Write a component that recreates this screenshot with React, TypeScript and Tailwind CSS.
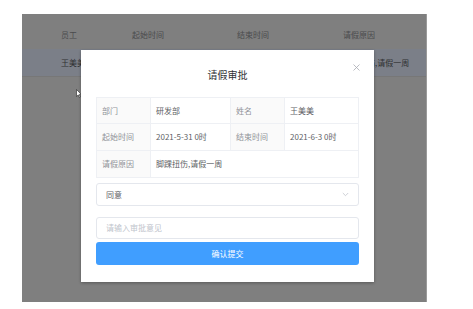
import React from 'react';

const font = { fontFamily: '"Noto Sans CJK SC", "Noto Sans", sans-serif' };

const rows = [
  { name: '王美美', start: '2021-5-31 0时', end: '2021-6-3 0时', reason: '脚踝扭伤,请假一周' },
];

export default function App() {
  return (
    <div className="w-[473px] h-[309px] bg-white overflow-hidden pt-[14px] pl-[22px]" style={font}>
      <div className="relative w-[405px] h-[288px] bg-[#7f7f7f] border-r border-[#9a9a9a]">
        {/* table behind the mask */}
        <div className="grid grid-cols-[71px_105px_106px_1fr] pl-[39px] h-[35px] items-center pt-[6px] text-[8px] text-[#4a4b4d]">
          <span>员工</span>
          <span>起始时间</span>
          <span>结束时间</span>
          <span>请假原因</span>
        </div>
        {rows.map((r) => (
          <div key={r.name} className="grid grid-cols-[71px_105px_106px_1fr] pl-[39px] h-[28px] items-center text-[8px] text-[#303133] bg-[#7b7f88] border-b border-[#777]">
            <span>{r.name}</span>
            <span>{r.start}</span>
            <span>{r.end}</span>
            <span>{r.reason}</span>
          </div>
        ))}

        {/* mouse cursor */}
        <svg className="absolute left-[54px] top-[75px]" width="6" height="9" viewBox="0 0 6 9">
          <path d="M0.5 0.5 L0.5 7.5 L2.2 6 L3.4 8.5 L4.4 8 L3.3 5.6 L5.5 5.6 Z" fill="#fff" stroke="#222" strokeWidth="0.6" />
        </svg>

        {/* dialog */}
        <div className="absolute left-[59px] top-[36px] w-[293px] h-[232px] bg-white shadow-[0_1px_3px_rgba(0,0,0,0.3)] px-[15px]">
          <div className="relative h-[47px] flex items-center justify-center pt-[1px]">
            <span className="text-[10px] text-[#303133]">请假审批</span>
            <svg className="absolute right-[-1px] top-[14px]" width="7" height="7" viewBox="0 0 7 7">
              <path d="M0.5 0.5 L6.5 6.5 M6.5 0.5 L0.5 6.5" stroke="#a8abb2" strokeWidth="0.8" />
            </svg>
          </div>

          <div className="border-t border-l border-[#eef0f4] text-[8px] text-[#606266]">
            <div className="grid grid-cols-[54px_80px_54px_1fr] h-[26px]">
              <div className="bg-[#fafafa] border-r border-b border-[#eef0f4] flex items-center pl-[5px] text-[#909399]">部门</div>
              <div className="border-r border-b border-[#eef0f4] flex items-center pl-[5px]">研发部</div>
              <div className="bg-[#fafafa] border-r border-b border-[#eef0f4] flex items-center pl-[5px] text-[#909399]">姓名</div>
              <div className="border-r border-b border-[#eef0f4] flex items-center pl-[5px]">王美美</div>
            </div>
            <div className="grid grid-cols-[54px_80px_54px_1fr] h-[27px]">
              <div className="bg-[#fafafa] border-r border-b border-[#eef0f4] flex items-center pl-[5px] text-[#909399]">起始时间</div>
              <div className="border-r border-b border-[#eef0f4] flex items-center pl-[5px]">2021-5-31 0时</div>
              <div className="bg-[#fafafa] border-r border-b border-[#eef0f4] flex items-center pl-[5px] text-[#909399]">结束时间</div>
              <div className="border-r border-b border-[#eef0f4] flex items-center pl-[5px]">2021-6-3 0时</div>
            </div>
            <div className="grid grid-cols-[54px_1fr] h-[27px]">
              <div className="bg-[#fafafa] border-r border-b border-[#eef0f4] flex items-center pl-[5px] text-[#909399]">请假原因</div>
              <div className="border-r border-b border-[#eef0f4] flex items-center pl-[5px]">脚踝扭伤,请假一周</div>
            </div>
          </div>

          <div className="mt-[5px] h-[23px] border border-[#e4e7ed] rounded-[3px] flex items-center justify-between px-[9px] text-[8px] text-[#606266]">
            <span>同意</span>
            <svg width="7" height="5" viewBox="0 0 7 5">
              <path d="M0.8 1 L3.5 3.7 L6.2 1" fill="none" stroke="#c0c4cc" strokeWidth="0.8" />
            </svg>
          </div>

          <div className="mt-[11px] h-[22px] border border-[#e4e7ed] rounded-[3px] flex items-center px-[9px] text-[8px] text-[#c0c4cc]">
            请输入审批意见
          </div>

          <div className="mt-[3px] h-[23px] bg-[#409eff] rounded-[3px] flex items-center justify-center text-[8px] text-white">
            确认提交
          </div>
        </div>
      </div>
    </div>
  );
}
